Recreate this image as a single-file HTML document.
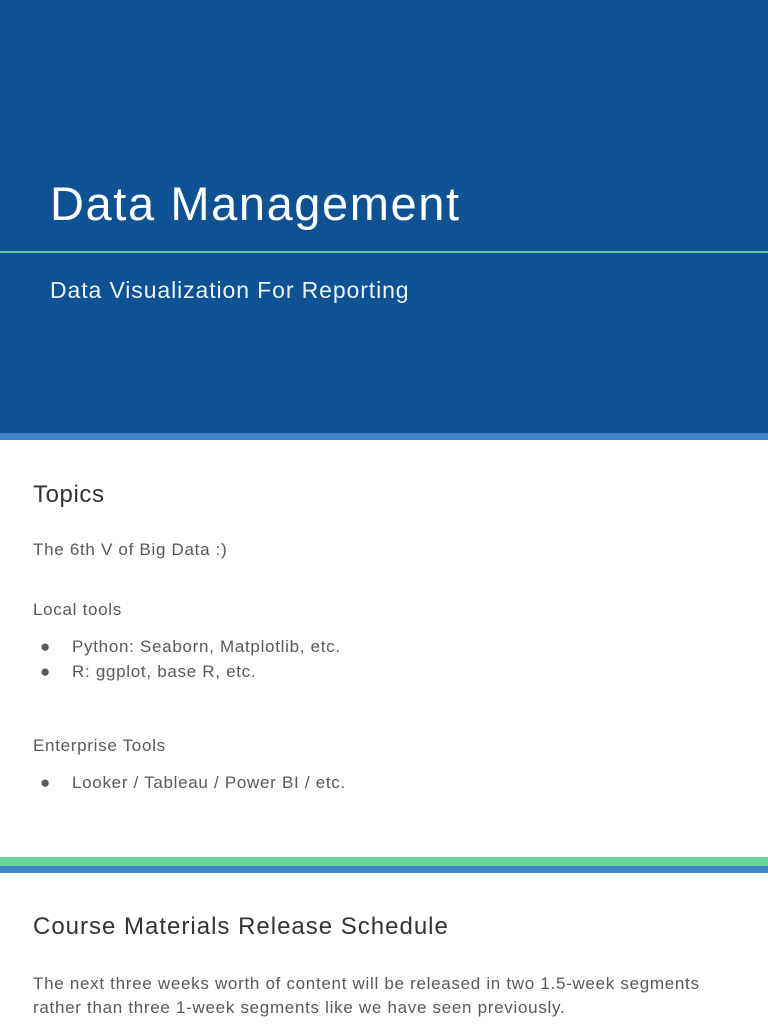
<!DOCTYPE html>
<html><head><style>
body{margin:0;width:768px;height:1024px;overflow:hidden;background:#fff;font-family:"Liberation Sans",sans-serif;position:relative}
.a{position:absolute;white-space:nowrap}
.t{color:#595959;font-size:17px;letter-spacing:0.7px}
</style></head><body>
<div class="a" style="left:0;top:0;width:768px;height:433px;background:#0e5293"></div>
<div class="a" style="left:0;top:251px;width:768px;height:2px;background:#5ccba0"></div>
<div class="a" style="left:0;top:433px;width:768px;height:7px;background:#3d85c6"></div>
<div class="a" style="left:50px;top:176px;color:#fff;font-size:47px;letter-spacing:1.6px">Data Management</div>
<div class="a" style="left:50px;top:277px;color:#eef3f8;font-size:23px;letter-spacing:0.9px">Data Visualization For Reporting</div>
<div class="a" style="left:33px;top:481px;color:#333;font-size:24px;letter-spacing:0.6px">Topics</div>
<div class="a t" style="left:33px;top:540px">The 6th V of Big Data :)</div>
<div class="a t" style="left:33px;top:600px">Local tools</div>
<div class="a t" style="left:40px;top:637px">●</div><div class="a t" style="left:72px;top:637px">Python: Seaborn, Matplotlib, etc.</div>
<div class="a t" style="left:40px;top:662px">●</div><div class="a t" style="left:72px;top:662px">R: ggplot, base R, etc.</div>
<div class="a t" style="left:33px;top:736px">Enterprise Tools</div>
<div class="a t" style="left:40px;top:773px">●</div><div class="a t" style="left:72px;top:773px">Looker / Tableau / Power BI / etc.</div>
<div class="a" style="left:0;top:857px;width:768px;height:9px;background:#66d39a"></div>
<div class="a" style="left:0;top:866px;width:768px;height:7px;background:#3d85c6"></div>
<div class="a" style="left:33px;top:913px;color:#333;font-size:24px;letter-spacing:1px">Course Materials Release Schedule</div>
<div class="a t" style="left:33px;top:972px;line-height:24px">The next three weeks worth of content will be released in two 1.5-week segments<br>rather than three 1-week segments like we have seen previously.</div>
</body></html>
